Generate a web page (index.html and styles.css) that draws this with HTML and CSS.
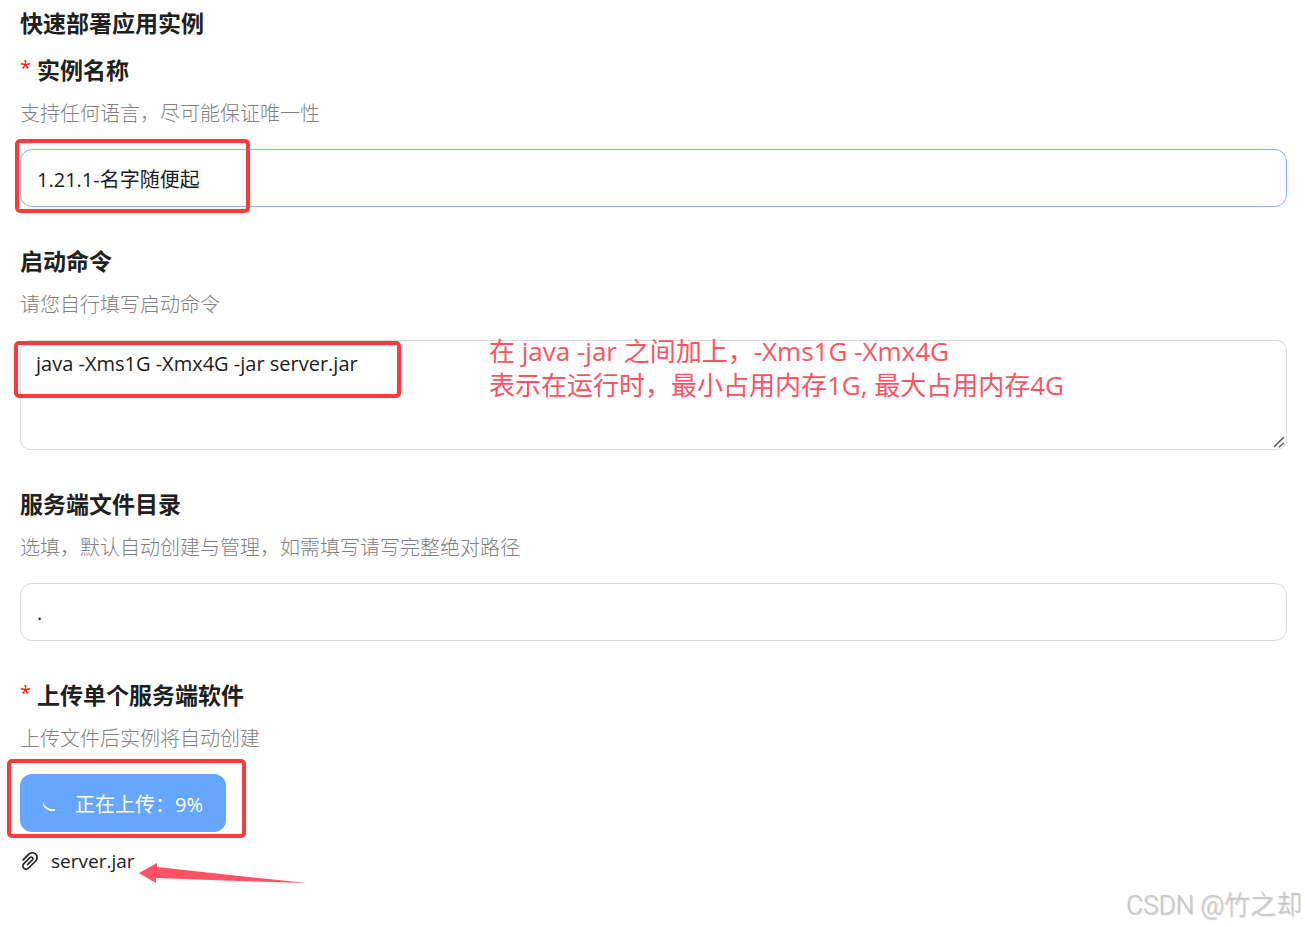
FILE: index.html
```html
<!DOCTYPE html>
<html lang="zh-CN">
    <head>
        <meta charset="UTF-8">
        <meta name="viewport" content="width=device-width, initial-scale=1.0">
        <title>快速部署应用实例</title>
        <link rel="stylesheet" href="styles.css">
    </head>

    <body>
        <form class="deploy-form" action="">
            <h1 class="title">快速部署应用实例</h1>

            <div class="field">
                <label class="label" for="name"><span class="required">*</span>实例名称</label>
                <p class="hint">支持任何语言，尽可能保证唯一性</p>
                <div class="control">
                    <input class="input input-active" id="name" name="name" type="text" value="1.21.1-名字随便起">
                    <span class="mark mark-name"></span>
                </div>
            </div>

            <div class="field">
                <label class="label" for="command">启动命令</label>
                <p class="hint">请您自行填写启动命令</p>
                <div class="control">
                    <textarea class="input textarea" id="command" name="command" spellcheck="false">java -Xms1G -Xmx4G -jar server.jar</textarea>
                    <svg class="resizer" viewBox="0 0 12 12" aria-hidden="true">
                        <path d="M1 11L11 1M6 11L11 7" fill="none" stroke="#555" stroke-width="1.500"/>
                    </svg>
                    <span class="mark mark-command"></span>
                    <p class="note">在 java -jar 之间加上，-Xms1G -Xmx4G<br>表示在运行时，最小占用内存1G, 最大占用内存4G</p>
                </div>
            </div>

            <div class="field">
                <label class="label" for="cwd">服务端文件目录</label>
                <p class="hint">选填，默认自动创建与管理，如需填写请写完整绝对路径</p>
                <div class="control">
                    <input class="input" id="cwd" name="cwd" type="text" value=".">
                </div>
            </div>

            <div class="field">
                <label class="label" for="upload"><span class="required">*</span>上传单个服务端软件</label>
                <p class="hint">上传文件后实例将自动创建</p>
                <div class="control">
                    <button class="upload" id="upload" type="button">
                        <svg class="spinner" viewBox="0 0 20 20" aria-hidden="true">
                            <path d="M3 6C4 11 8 15 15 14L15 16C7 17 2 12 3 6Z" fill="currentColor"/>
                        </svg>
                        正在上传：9%
                    </button>
                    <span class="mark mark-upload"></span>
                </div>
                <div class="file">
                    <svg class="clip" viewBox="0 0 1024 1024" aria-hidden="true">
                        <path fill="currentColor" d="M779.3 196.600c-94.200-94.200-247.600-94.200-341.700 0l-261 260.800c-1.700 1.700-2.600 4-2.600 6.400s.9 4.700 2.600 6.400l36.900 36.900a9 9 0 0012.700 0l261-260.800c32.400-32.400 75.500-50.200 121.300-50.200s88.900 17.800 121.200 50.200c32.400 32.400 50.200 75.500 50.200 121.200 0 45.800-17.800 88.800-50.200 121.200l-266 265.900-43.100 43.100c-40.300 40.300-105.800 40.300-146.100 0-19.500-19.500-30.200-45.400-30.200-73s10.700-53.500 30.200-73l263.900-263.800c6.700-6.600 15.500-10.300 24.900-10.300h.1c9.400 0 18.100 3.700 24.700 10.300 6.700 6.700 10.300 15.500 10.300 24.900 0 9.300-3.700 18.100-10.300 24.700L372.400 653c-1.700 1.700-2.600 4-2.600 6.400s.9 4.700 2.600 6.400l36.900 36.900a9 9 0 0012.700 0l215.600-215.600c19.900-19.900 30.800-46.300 30.800-74.400s-11-54.600-30.800-74.400c-41.100-41.100-107.900-41-149 0L463 364 224.800 602.100A172.220 172.220 0 00174 724.800c0 46.300 18.100 89.800 50.800 122.500 33.900 33.800 78.300 50.700 122.700 50.700 44.400 0 88.800-16.900 122.600-50.700l309.200-309C824.800 492.700 850 432 850 367.500c.1-64.600-25.100-125.300-70.700-170.900z"/>
                    </svg>
                    <span class="file-name">server.jar</span>
                    <svg class="arrow" viewBox="0 0 168 22" aria-hidden="true">
                        <path fill="#ff5264" d="M0 11L18 1L18 5L100 14L168 21L100 19L17 16L17 21Z"/>
                    </svg>
                </div>
            </div>
        </form>
        <span class="watermark">CSDN @竹之却</span>
    </body>
</html>
```

FILE: styles.css
```css
* {
    box-sizing: border-box;
}

body {
    position: relative;
    min-height: 100vh;
    margin: 0;
    background: #fff;
    color: #202020;
    font-family: "Open Sans", "Noto Sans CJK SC", sans-serif;
    font-size: 20px;
    line-height: 32px;
}

.deploy-form {
    padding: 5px 18px 32px 20px;
}

.title,
.label {
    margin: 0;
    font-size: 23px;
    font-weight: 700;
    line-height: 36px;
}

.title {
    margin-bottom: 11px;
}

.label {
    display: flex;
    align-items: flex-start;
}

.field {
    margin-bottom: 36px;
}

.field:last-child {
    margin-bottom: 0;
}

.required {
    margin-right: 6px;
    color: #ff1414;
    font-size: 20px;
    font-weight: 400;
    line-height: 32px;
}

.hint {
    margin: 10px 0 19px;
    color: #808080;
    font-weight: 300;
}

.control {
    position: relative;
}

.input {
    display: block;
    width: 100%;
    height: 58px;
    padding: 0 16px;
    border: 1px solid #d9d9d9;
    border-radius: 12px;
    outline: none;
    background: #fff;
    color: inherit;
    font: inherit;
}

.input-active {
    border-color: #85b4ed;
}

.textarea {
    height: 110px;
    padding: 7px 15px;
    border-radius: 10px;
    resize: vertical;
}

.textarea::-webkit-resizer {
    display: none;
}

.resizer {
    position: absolute;
    right: 2px;
    bottom: 2px;
    width: 12px;
    height: 12px;
    pointer-events: none;
}

.upload {
    display: flex;
    align-items: center;
    gap: 15px;
    height: 58px;
    padding: 3px 23px 0 20px;
    border: none;
    border-radius: 12px;
    background: #66a6ff;
    color: #fff;
    font: inherit;
}

.spinner {
    width: 20px;
    height: 20px;
}

.file {
    position: relative;
    display: flex;
    align-items: center;
    gap: 9px;
    width: max-content;
    margin-top: 13px;
}

.file-name {
    font-size: 19px;
}

.clip {
    width: 24px;
    height: 24px;
    margin-left: -2px;
}

/* red annotations over the form */
.mark {
    position: absolute;
    border: 4px solid #fc3a3a;
    border-radius: 5px;
    pointer-events: none;
}

.mark-name {
    top: -10px;
    left: -5px;
    width: 235px;
    height: 74px;
}

.mark-command {
    top: 1px;
    left: -6px;
    width: 387px;
    height: 57px;
}

.mark-upload {
    top: -15px;
    left: -13px;
    width: 239px;
    height: 79px;
}

.note {
    position: absolute;
    top: -6px;
    left: 469px;
    margin: 0;
    color: #ff5264;
    font-size: 26px;
    line-height: 34px;
    white-space: nowrap;
    pointer-events: none;
}

.arrow {
    position: absolute;
    top: 17px;
    left: 119px;
    width: 168px;
    height: 22px;
}

.watermark {
    position: absolute;
    right: 3px;
    bottom: 3px;
    color: #c8c8c8;
    font-family: Roboto, "Noto Sans CJK SC", sans-serif;
    font-size: 26px;
    font-weight: 300;
    line-height: 38px;
    text-shadow: 1px 1px 1px #ccc;
}
```
